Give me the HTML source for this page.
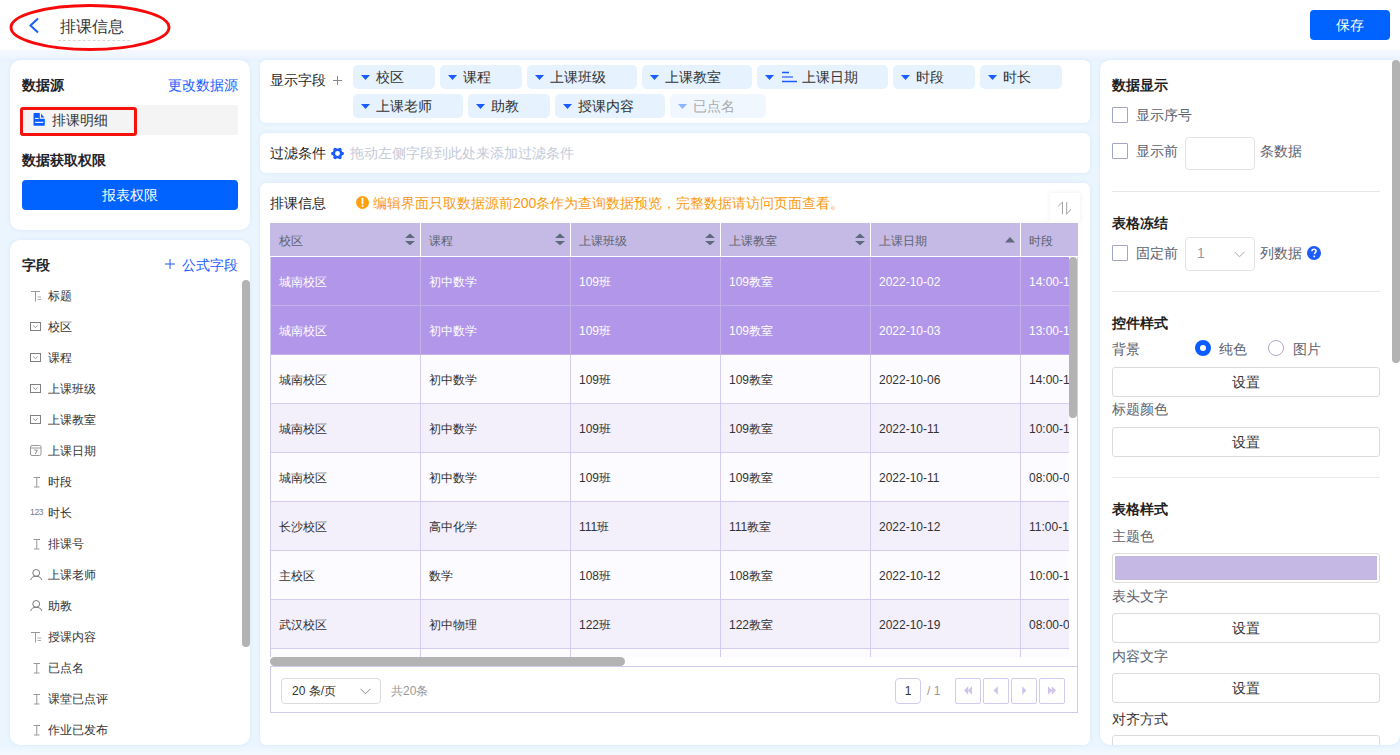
<!DOCTYPE html>
<html><head><meta charset="utf-8">
<style>
*{box-sizing:border-box;margin:0;padding:0}
html,body{width:1400px;height:755px;overflow:hidden}
body{font-family:"Liberation Sans",sans-serif;background:#ebf5fe;position:relative;color:#1f2329}
.a{position:absolute;white-space:nowrap}
.hdr{left:0;top:0;width:1400px;height:50px;background:#fff}
.panel{position:absolute;background:#fff;border-radius:10px;box-shadow:0 0 4px rgba(40,140,255,0.10)}
.t14{font-size:14px;line-height:14px}
.t12{font-size:12px;line-height:12px}
.b{font-weight:bold}
.blue{color:#1a5cff}
</style></head><body>
<!-- header -->
<div class="a" style="left:0;top:744px;width:1400px;height:11px;background:linear-gradient(#e9f4fe,#f4f9fe)"></div>
<div class="a hdr"></div>
<div class="a" style="left:0;top:50px;width:1400px;height:12px;background:linear-gradient(#f6f9fe,#e8f2fe)"></div>
<svg class="a" style="left:28px;top:17px" width="12" height="17" viewBox="0 0 12 17"><path d="M10 1.5 L2.5 8.5 L10 15.5" fill="none" stroke="#1a5cff" stroke-width="2"/></svg>
<div class="a" style="left:60px;top:18px;font-size:16px;line-height:18px;color:#333">排课信息</div>
<div class="a" style="left:58px;top:40px;width:72px;border-top:1px dashed #d8d8d8"></div>
<svg class="a" style="left:9px;top:3px" width="162" height="49" viewBox="0 0 162 49"><ellipse cx="81" cy="24.5" rx="79" ry="22" fill="none" stroke="#f80a0a" stroke-width="2.9"/></svg>
<div class="a" style="left:1310px;top:10px;width:80px;height:30px;background:#0062ff;border-radius:4px;color:#fff;font-size:14px;line-height:30px;text-align:center">保存</div>

<!-- left panel 1 -->
<div class="panel" style="left:10px;top:60px;width:240px;height:170px"></div>
<div class="a t14 b" style="left:22px;top:78px">数据源</div>
<div class="a t14 blue" style="left:168px;top:78px">更改数据源</div>
<div class="a" style="left:22px;top:105px;width:216px;height:30px;background:#f4f4f4;border-radius:2px"></div>
<svg class="a" style="left:33px;top:113px" width="13" height="14" viewBox="-0.5 0 13 14"><path d="M0.8 0H6.3V5.7H11.3V11.9A0.8 0.8 0 0 1 10.5 12.7H0.8A0.8 0.8 0 0 1 0 11.9V0.8A0.8 0.8 0 0 1 0.8 0Z" fill="#0a5cff"/><path d="M7.5 0.7V4.6H10.9Z" fill="#0a5cff"/><rect x="1.6" y="4.9" width="3.6" height="1.1" fill="#fff"/><rect x="1.6" y="8.8" width="8.2" height="1.1" fill="#fff"/></svg>
<div class="a t14" style="left:52px;top:113px;color:#333">排课明细</div>
<div class="a" style="left:20px;top:107px;width:117px;height:29px;border:3px solid #f5120c;border-radius:3px"></div>
<div class="a t14 b" style="left:22px;top:153px">数据获取权限</div>
<div class="a" style="left:22px;top:180px;width:216px;height:30px;background:#0062ff;border-radius:4px;color:#fff;font-size:14px;line-height:30px;text-align:center">报表权限</div>

<!-- left panel 2 -->
<div class="panel" style="left:10px;top:240px;width:240px;height:505px"></div>
<div class="a t14 b" style="left:22px;top:258px">字段</div>
<svg class="a" style="left:165px;top:259px" width="10" height="10" viewBox="0 0 10 10"><path d="M5 0V10M0 5H10" stroke="#1a5cff" stroke-width="1"/></svg>
<div class="a t14 blue" style="left:182px;top:258px">公式字段</div>
<div class="a" style="left:242px;top:280px;width:8px;height:367px;background:#b3b3b3;border-radius:4px"></div>
<svg class="a" style="left:31px;top:291px" width="11" height="11" viewBox="0 0 11 11"><path d="M0 0.5H9M4.5 0.5V10.5" stroke="#999" stroke-width="1" fill="none"/><path d="M6.5 6H10M6.5 8.5H10" stroke="#aaa" stroke-width="1" fill="none"/></svg>
<div class="a t12" style="left:48px;top:290px;color:#333">标题</div>
<svg class="a" style="left:29px;top:322px" width="12" height="10" viewBox="0 0 12 10"><rect x="1.5" y="0.5" width="10" height="8" fill="none" stroke="#808080" stroke-width="1"/><path d="M4.3 3.4L6.5 5.6L8.7 3.4" fill="none" stroke="#999" stroke-width="1"/></svg>
<div class="a t12" style="left:48px;top:321px;color:#333">校区</div>
<svg class="a" style="left:29px;top:353px" width="12" height="10" viewBox="0 0 12 10"><rect x="1.5" y="0.5" width="10" height="8" fill="none" stroke="#808080" stroke-width="1"/><path d="M4.3 3.4L6.5 5.6L8.7 3.4" fill="none" stroke="#999" stroke-width="1"/></svg>
<div class="a t12" style="left:48px;top:352px;color:#333">课程</div>
<svg class="a" style="left:29px;top:384px" width="12" height="10" viewBox="0 0 12 10"><rect x="1.5" y="0.5" width="10" height="8" fill="none" stroke="#808080" stroke-width="1"/><path d="M4.3 3.4L6.5 5.6L8.7 3.4" fill="none" stroke="#999" stroke-width="1"/></svg>
<div class="a t12" style="left:48px;top:383px;color:#333">上课班级</div>
<svg class="a" style="left:29px;top:415px" width="12" height="10" viewBox="0 0 12 10"><rect x="1.5" y="0.5" width="10" height="8" fill="none" stroke="#808080" stroke-width="1"/><path d="M4.3 3.4L6.5 5.6L8.7 3.4" fill="none" stroke="#999" stroke-width="1"/></svg>
<div class="a t12" style="left:48px;top:414px;color:#333">上课教室</div>
<svg class="a" style="left:30px;top:445px" width="12" height="11" viewBox="0 0 12 11"><rect x="0.5" y="0.5" width="10.5" height="10" rx="1.5" fill="none" stroke="#999" stroke-width="1"/><path d="M0.5 3H11" stroke="#999" stroke-width="1"/><path d="M4.3 5H7.3L5.3 9" fill="none" stroke="#888" stroke-width="0.9"/></svg>
<div class="a t12" style="left:48px;top:445px;color:#333">上课日期</div>
<svg class="a" style="left:33px;top:477px" width="8" height="11" viewBox="0 0 8 11"><path d="M0.5 0.5H7M3.75 0.5V10M1 10H6.5" stroke="#999" stroke-width="1" fill="none"/></svg>
<div class="a t12" style="left:48px;top:476px;color:#333">时段</div>
<div class="a" style="left:30px;top:508px;font-size:8.6px;line-height:9px;color:#7a7a8a;letter-spacing:-0.35px">123</div>
<div class="a t12" style="left:48px;top:507px;color:#333">时长</div>
<svg class="a" style="left:33px;top:539px" width="8" height="11" viewBox="0 0 8 11"><path d="M0.5 0.5H7M3.75 0.5V10M1 10H6.5" stroke="#999" stroke-width="1" fill="none"/></svg>
<div class="a t12" style="left:48px;top:538px;color:#333">排课号</div>
<svg class="a" style="left:30px;top:568px" width="13" height="13" viewBox="0 0 13 13"><circle cx="6.2" cy="4.9" r="3.4" fill="none" stroke="#777" stroke-width="1"/><path d="M0.6 12C1.2 9.6 3.2 8.3 6.2 8.3S11.2 9.6 11.8 12" fill="none" stroke="#777" stroke-width="1"/></svg>
<div class="a t12" style="left:48px;top:569px;color:#333">上课老师</div>
<svg class="a" style="left:30px;top:599px" width="13" height="13" viewBox="0 0 13 13"><circle cx="6.2" cy="4.9" r="3.4" fill="none" stroke="#777" stroke-width="1"/><path d="M0.6 12C1.2 9.6 3.2 8.3 6.2 8.3S11.2 9.6 11.8 12" fill="none" stroke="#777" stroke-width="1"/></svg>
<div class="a t12" style="left:48px;top:600px;color:#333">助教</div>
<svg class="a" style="left:31px;top:632px" width="11" height="11" viewBox="0 0 11 11"><path d="M0 0.5H9M4.5 0.5V10.5" stroke="#999" stroke-width="1" fill="none"/><path d="M6.5 6H10M6.5 8.5H10" stroke="#aaa" stroke-width="1" fill="none"/></svg>
<div class="a t12" style="left:48px;top:631px;color:#333">授课内容</div>
<svg class="a" style="left:33px;top:663px" width="8" height="11" viewBox="0 0 8 11"><path d="M0.5 0.5H7M3.75 0.5V10M1 10H6.5" stroke="#999" stroke-width="1" fill="none"/></svg>
<div class="a t12" style="left:48px;top:662px;color:#333">已点名</div>
<svg class="a" style="left:33px;top:694px" width="8" height="11" viewBox="0 0 8 11"><path d="M0.5 0.5H7M3.75 0.5V10M1 10H6.5" stroke="#999" stroke-width="1" fill="none"/></svg>
<div class="a t12" style="left:48px;top:693px;color:#333">课堂已点评</div>
<svg class="a" style="left:33px;top:725px" width="8" height="11" viewBox="0 0 8 11"><path d="M0.5 0.5H7M3.75 0.5V10M1 10H6.5" stroke="#999" stroke-width="1" fill="none"/></svg>
<div class="a t12" style="left:48px;top:724px;color:#333">作业已发布</div>

<!-- middle panels -->
<div class="panel" style="left:260px;top:60px;width:830px;height:63px;border-radius:6px"></div>
<div class="panel" style="left:260px;top:133px;width:830px;height:40px;border-radius:6px"></div>
<div class="a t14" style="left:270px;top:73px;color:#1f1f1f">显示字段</div>
<svg class="a" style="left:333px;top:76px" width="9" height="9" viewBox="0 0 9 9"><path d="M4.5 0V9M0 4.5H9" stroke="#888" stroke-width="1"/></svg>
<div class="a" style="left:353px;top:65px;width:82px;height:24px;background:#e6f2fe;border-radius:5px"></div>
<svg class="a" style="left:361px;top:75px" width="9" height="5" viewBox="0 0 9 5"><path d="M0 0H9L4.5 5Z" fill="#1a5cff"/></svg>
<div class="a t14" style="left:376px;top:70px;color:#333">校区</div>
<div class="a" style="left:440px;top:65px;width:82px;height:24px;background:#e6f2fe;border-radius:5px"></div>
<svg class="a" style="left:448px;top:75px" width="9" height="5" viewBox="0 0 9 5"><path d="M0 0H9L4.5 5Z" fill="#1a5cff"/></svg>
<div class="a t14" style="left:463px;top:70px;color:#333">课程</div>
<div class="a" style="left:527px;top:65px;width:110px;height:24px;background:#e6f2fe;border-radius:5px"></div>
<svg class="a" style="left:535px;top:75px" width="9" height="5" viewBox="0 0 9 5"><path d="M0 0H9L4.5 5Z" fill="#1a5cff"/></svg>
<div class="a t14" style="left:550px;top:70px;color:#333">上课班级</div>
<div class="a" style="left:642px;top:65px;width:110px;height:24px;background:#e6f2fe;border-radius:5px"></div>
<svg class="a" style="left:650px;top:75px" width="9" height="5" viewBox="0 0 9 5"><path d="M0 0H9L4.5 5Z" fill="#1a5cff"/></svg>
<div class="a t14" style="left:665px;top:70px;color:#333">上课教室</div>
<div class="a" style="left:757px;top:65px;width:131px;height:24px;background:#e6f2fe;border-radius:5px"></div>
<svg class="a" style="left:765px;top:75px" width="9" height="5" viewBox="0 0 9 5"><path d="M0 0H9L4.5 5Z" fill="#1a5cff"/></svg>
<svg class="a" style="left:781px;top:71px" width="16" height="12" viewBox="0 0 16 12"><path d="M1 1.5H8M1 6H12M1 10.5H16.5" stroke="#1a5cff" stroke-width="1.3"/><path d="M1 6H12" stroke="#7f9dff" stroke-width="1.6"/></svg>
<div class="a t14" style="left:802px;top:70px;color:#333">上课日期</div>
<div class="a" style="left:893px;top:65px;width:82px;height:24px;background:#e6f2fe;border-radius:5px"></div>
<svg class="a" style="left:901px;top:75px" width="9" height="5" viewBox="0 0 9 5"><path d="M0 0H9L4.5 5Z" fill="#1a5cff"/></svg>
<div class="a t14" style="left:916px;top:70px;color:#333">时段</div>
<div class="a" style="left:980px;top:65px;width:82px;height:24px;background:#e6f2fe;border-radius:5px"></div>
<svg class="a" style="left:988px;top:75px" width="9" height="5" viewBox="0 0 9 5"><path d="M0 0H9L4.5 5Z" fill="#1a5cff"/></svg>
<div class="a t14" style="left:1003px;top:70px;color:#333">时长</div>
<div class="a" style="left:353px;top:94px;width:110px;height:24px;background:#e6f2fe;border-radius:5px"></div>
<svg class="a" style="left:361px;top:104px" width="9" height="5" viewBox="0 0 9 5"><path d="M0 0H9L4.5 5Z" fill="#1a5cff"/></svg>
<div class="a t14" style="left:376px;top:99px;color:#333">上课老师</div>
<div class="a" style="left:468px;top:94px;width:82px;height:24px;background:#e6f2fe;border-radius:5px"></div>
<svg class="a" style="left:476px;top:104px" width="9" height="5" viewBox="0 0 9 5"><path d="M0 0H9L4.5 5Z" fill="#1a5cff"/></svg>
<div class="a t14" style="left:491px;top:99px;color:#333">助教</div>
<div class="a" style="left:555px;top:94px;width:110px;height:24px;background:#e6f2fe;border-radius:5px"></div>
<svg class="a" style="left:563px;top:104px" width="9" height="5" viewBox="0 0 9 5"><path d="M0 0H9L4.5 5Z" fill="#1a5cff"/></svg>
<div class="a t14" style="left:578px;top:99px;color:#333">授课内容</div>
<div class="a" style="left:670px;top:94px;width:96px;height:24px;background:#f0f7fe;border-radius:5px"></div>
<svg class="a" style="left:678px;top:104px" width="9" height="5" viewBox="0 0 9 5"><path d="M0 0H9L4.5 5Z" fill="#8fb4ff"/></svg>
<div class="a t14" style="left:693px;top:99px;color:#aaa">已点名</div>
<div class="a t14" style="left:270px;top:146px;color:#1f1f1f">过滤条件</div>
<svg class="a" style="left:331px;top:147px" width="13" height="13" viewBox="0 0 13 13"><circle cx="6.5" cy="6.5" r="4.9" fill="#1a5cff"/><circle cx="11.25" cy="6.50" r="1.75" fill="#1a5cff"/><circle cx="8.88" cy="10.48" r="1.75" fill="#1a5cff"/><circle cx="4.13" cy="10.48" r="1.75" fill="#1a5cff"/><circle cx="1.75" cy="6.50" r="1.75" fill="#1a5cff"/><circle cx="4.12" cy="2.52" r="1.75" fill="#1a5cff"/><circle cx="8.88" cy="2.52" r="1.75" fill="#1a5cff"/><circle cx="6.5" cy="6.5" r="2.4" fill="#fff"/></svg>
<div class="a t14" style="left:350px;top:146px;color:#c3cad8">拖动左侧字段到此处来添加过滤条件</div>
<div class="panel" style="left:260px;top:183px;width:830px;height:562px;border-radius:6px"></div>
<div class="a t14" style="left:270px;top:196px;color:#1f1f1f">排课信息</div>
<svg class="a" style="left:356px;top:196px" width="13" height="13" viewBox="0 0 13 13"><circle cx="6.5" cy="6.5" r="6.5" fill="#ffa00a"/><path d="M6.5 2.6V7.6" stroke="#fff" stroke-width="1.8" stroke-linecap="round"/><circle cx="6.5" cy="10" r="1" fill="#fff"/></svg>
<div class="a t14" style="left:373px;top:196px;color:#fa9a12">编辑界面只取数据源前200条作为查询数据预览，完整数据请访问页面查看。</div>
<div class="a" style="left:1050px;top:193px;width:30px;height:30px;background:#fff;box-shadow:0 0 4px rgba(60,40,140,0.09)"></div>
<svg class="a" style="left:1056px;top:200px" width="16" height="16" viewBox="0 0 16 16"><path d="M2.2 6.3L6.5 2V14.2" fill="none" stroke="#a5a5a5" stroke-width="1"/><path d="M10.7 2V14.2L14.9 9.2" fill="none" stroke="#a5a5a5" stroke-width="1"/></svg>
<div class="a" style="left:270px;top:223px;width:808px;height:490px;border:1px solid #d4c9ef;border-top:none;background:#fff"></div>
<div class="a" style="left:270px;top:223px;width:808px;height:33px;background:#c5b9e5"></div>
<div class="a" style="left:270px;top:256px;width:808px;height:1px;background:#fff"></div>
<div class="a t12" style="left:279px;top:235px;color:#5d6470">校区</div>
<svg class="a" style="left:405px;top:233px" width="10" height="13" viewBox="0 0 10 13"><path d="M0 5H10L5 0.6Z" fill="#5c6a7c"/><path d="M0 8H10L5 12.2Z" fill="#5c6a7c"/></svg>
<div class="a" style="left:420px;top:223px;width:1px;height:33px;background:#fff"></div>
<div class="a t12" style="left:429px;top:235px;color:#5d6470">课程</div>
<svg class="a" style="left:555px;top:233px" width="10" height="13" viewBox="0 0 10 13"><path d="M0 5H10L5 0.6Z" fill="#5c6a7c"/><path d="M0 8H10L5 12.2Z" fill="#5c6a7c"/></svg>
<div class="a" style="left:570px;top:223px;width:1px;height:33px;background:#fff"></div>
<div class="a t12" style="left:579px;top:235px;color:#5d6470">上课班级</div>
<svg class="a" style="left:705px;top:233px" width="10" height="13" viewBox="0 0 10 13"><path d="M0 5H10L5 0.6Z" fill="#5c6a7c"/><path d="M0 8H10L5 12.2Z" fill="#5c6a7c"/></svg>
<div class="a" style="left:720px;top:223px;width:1px;height:33px;background:#fff"></div>
<div class="a t12" style="left:729px;top:235px;color:#5d6470">上课教室</div>
<svg class="a" style="left:855px;top:233px" width="10" height="13" viewBox="0 0 10 13"><path d="M0 5H10L5 0.6Z" fill="#5c6a7c"/><path d="M0 8H10L5 12.2Z" fill="#5c6a7c"/></svg>
<div class="a" style="left:870px;top:223px;width:1px;height:33px;background:#fff"></div>
<div class="a t12" style="left:879px;top:235px;color:#5d6470">上课日期</div>
<svg class="a" style="left:1005px;top:237px" width="10" height="6" viewBox="0 0 10 6"><path d="M0 5.5H10L5 0Z" fill="#5f6b7a"/></svg>
<div class="a" style="left:1020px;top:223px;width:1px;height:33px;background:#fff"></div>
<div class="a t12" style="left:1029px;top:235px;color:#5d6470">时段</div>
<div class="a" style="left:270px;top:257px;width:799px;height:400px;overflow:hidden">
<div class="a" style="left:0;top:0px;width:900px;height:49px;background:#b196e9;border-bottom:1px solid #c3b0e6"></div>
<div class="a t12" style="left:9px;top:19px;color:#fff">城南校区</div>
<div class="a" style="left:150px;top:0px;width:1px;height:49px;background:#c3b0e6"></div>
<div class="a t12" style="left:159px;top:19px;color:#fff">初中数学</div>
<div class="a" style="left:300px;top:0px;width:1px;height:49px;background:#c3b0e6"></div>
<div class="a t12" style="left:309px;top:19px;color:#fff">109班</div>
<div class="a" style="left:450px;top:0px;width:1px;height:49px;background:#c3b0e6"></div>
<div class="a t12" style="left:459px;top:19px;color:#fff">109教室</div>
<div class="a" style="left:600px;top:0px;width:1px;height:49px;background:#c3b0e6"></div>
<div class="a t12" style="left:609px;top:19px;color:#fff">2022-10-02</div>
<div class="a" style="left:750px;top:0px;width:1px;height:49px;background:#c3b0e6"></div>
<div class="a t12" style="left:759px;top:19px;color:#fff">14:00-16:00</div>
<div class="a" style="left:0;top:49px;width:900px;height:49px;background:#b196e9;border-bottom:1px solid #c3b0e6"></div>
<div class="a t12" style="left:9px;top:68px;color:#fff">城南校区</div>
<div class="a" style="left:150px;top:49px;width:1px;height:49px;background:#c3b0e6"></div>
<div class="a t12" style="left:159px;top:68px;color:#fff">初中数学</div>
<div class="a" style="left:300px;top:49px;width:1px;height:49px;background:#c3b0e6"></div>
<div class="a t12" style="left:309px;top:68px;color:#fff">109班</div>
<div class="a" style="left:450px;top:49px;width:1px;height:49px;background:#c3b0e6"></div>
<div class="a t12" style="left:459px;top:68px;color:#fff">109教室</div>
<div class="a" style="left:600px;top:49px;width:1px;height:49px;background:#c3b0e6"></div>
<div class="a t12" style="left:609px;top:68px;color:#fff">2022-10-03</div>
<div class="a" style="left:750px;top:49px;width:1px;height:49px;background:#c3b0e6"></div>
<div class="a t12" style="left:759px;top:68px;color:#fff">13:00-15:00</div>
<div class="a" style="left:0;top:98px;width:900px;height:49px;background:#fcfbff;border-bottom:1px solid #d6cbf0"></div>
<div class="a t12" style="left:9px;top:117px;color:#333">城南校区</div>
<div class="a" style="left:150px;top:98px;width:1px;height:49px;background:#d6cbf0"></div>
<div class="a t12" style="left:159px;top:117px;color:#333">初中数学</div>
<div class="a" style="left:300px;top:98px;width:1px;height:49px;background:#d6cbf0"></div>
<div class="a t12" style="left:309px;top:117px;color:#333">109班</div>
<div class="a" style="left:450px;top:98px;width:1px;height:49px;background:#d6cbf0"></div>
<div class="a t12" style="left:459px;top:117px;color:#333">109教室</div>
<div class="a" style="left:600px;top:98px;width:1px;height:49px;background:#d6cbf0"></div>
<div class="a t12" style="left:609px;top:117px;color:#333">2022-10-06</div>
<div class="a" style="left:750px;top:98px;width:1px;height:49px;background:#d6cbf0"></div>
<div class="a t12" style="left:759px;top:117px;color:#333">14:00-16:00</div>
<div class="a" style="left:0;top:147px;width:900px;height:49px;background:#f3effb;border-bottom:1px solid #d6cbf0"></div>
<div class="a t12" style="left:9px;top:166px;color:#333">城南校区</div>
<div class="a" style="left:150px;top:147px;width:1px;height:49px;background:#d6cbf0"></div>
<div class="a t12" style="left:159px;top:166px;color:#333">初中数学</div>
<div class="a" style="left:300px;top:147px;width:1px;height:49px;background:#d6cbf0"></div>
<div class="a t12" style="left:309px;top:166px;color:#333">109班</div>
<div class="a" style="left:450px;top:147px;width:1px;height:49px;background:#d6cbf0"></div>
<div class="a t12" style="left:459px;top:166px;color:#333">109教室</div>
<div class="a" style="left:600px;top:147px;width:1px;height:49px;background:#d6cbf0"></div>
<div class="a t12" style="left:609px;top:166px;color:#333">2022-10-11</div>
<div class="a" style="left:750px;top:147px;width:1px;height:49px;background:#d6cbf0"></div>
<div class="a t12" style="left:759px;top:166px;color:#333">10:00-12:00</div>
<div class="a" style="left:0;top:196px;width:900px;height:49px;background:#fcfbff;border-bottom:1px solid #d6cbf0"></div>
<div class="a t12" style="left:9px;top:215px;color:#333">城南校区</div>
<div class="a" style="left:150px;top:196px;width:1px;height:49px;background:#d6cbf0"></div>
<div class="a t12" style="left:159px;top:215px;color:#333">初中数学</div>
<div class="a" style="left:300px;top:196px;width:1px;height:49px;background:#d6cbf0"></div>
<div class="a t12" style="left:309px;top:215px;color:#333">109班</div>
<div class="a" style="left:450px;top:196px;width:1px;height:49px;background:#d6cbf0"></div>
<div class="a t12" style="left:459px;top:215px;color:#333">109教室</div>
<div class="a" style="left:600px;top:196px;width:1px;height:49px;background:#d6cbf0"></div>
<div class="a t12" style="left:609px;top:215px;color:#333">2022-10-11</div>
<div class="a" style="left:750px;top:196px;width:1px;height:49px;background:#d6cbf0"></div>
<div class="a t12" style="left:759px;top:215px;color:#333">08:00-09:00</div>
<div class="a" style="left:0;top:245px;width:900px;height:49px;background:#f3effb;border-bottom:1px solid #d6cbf0"></div>
<div class="a t12" style="left:9px;top:264px;color:#333">长沙校区</div>
<div class="a" style="left:150px;top:245px;width:1px;height:49px;background:#d6cbf0"></div>
<div class="a t12" style="left:159px;top:264px;color:#333">高中化学</div>
<div class="a" style="left:300px;top:245px;width:1px;height:49px;background:#d6cbf0"></div>
<div class="a t12" style="left:309px;top:264px;color:#333">111班</div>
<div class="a" style="left:450px;top:245px;width:1px;height:49px;background:#d6cbf0"></div>
<div class="a t12" style="left:459px;top:264px;color:#333">111教室</div>
<div class="a" style="left:600px;top:245px;width:1px;height:49px;background:#d6cbf0"></div>
<div class="a t12" style="left:609px;top:264px;color:#333">2022-10-12</div>
<div class="a" style="left:750px;top:245px;width:1px;height:49px;background:#d6cbf0"></div>
<div class="a t12" style="left:759px;top:264px;color:#333">11:00-13:00</div>
<div class="a" style="left:0;top:294px;width:900px;height:49px;background:#fcfbff;border-bottom:1px solid #d6cbf0"></div>
<div class="a t12" style="left:9px;top:313px;color:#333">主校区</div>
<div class="a" style="left:150px;top:294px;width:1px;height:49px;background:#d6cbf0"></div>
<div class="a t12" style="left:159px;top:313px;color:#333">数学</div>
<div class="a" style="left:300px;top:294px;width:1px;height:49px;background:#d6cbf0"></div>
<div class="a t12" style="left:309px;top:313px;color:#333">108班</div>
<div class="a" style="left:450px;top:294px;width:1px;height:49px;background:#d6cbf0"></div>
<div class="a t12" style="left:459px;top:313px;color:#333">108教室</div>
<div class="a" style="left:600px;top:294px;width:1px;height:49px;background:#d6cbf0"></div>
<div class="a t12" style="left:609px;top:313px;color:#333">2022-10-12</div>
<div class="a" style="left:750px;top:294px;width:1px;height:49px;background:#d6cbf0"></div>
<div class="a t12" style="left:759px;top:313px;color:#333">10:00-12:00</div>
<div class="a" style="left:0;top:343px;width:900px;height:49px;background:#f3effb;border-bottom:1px solid #d6cbf0"></div>
<div class="a t12" style="left:9px;top:362px;color:#333">武汉校区</div>
<div class="a" style="left:150px;top:343px;width:1px;height:49px;background:#d6cbf0"></div>
<div class="a t12" style="left:159px;top:362px;color:#333">初中物理</div>
<div class="a" style="left:300px;top:343px;width:1px;height:49px;background:#d6cbf0"></div>
<div class="a t12" style="left:309px;top:362px;color:#333">122班</div>
<div class="a" style="left:450px;top:343px;width:1px;height:49px;background:#d6cbf0"></div>
<div class="a t12" style="left:459px;top:362px;color:#333">122教室</div>
<div class="a" style="left:600px;top:343px;width:1px;height:49px;background:#d6cbf0"></div>
<div class="a t12" style="left:609px;top:362px;color:#333">2022-10-19</div>
<div class="a" style="left:750px;top:343px;width:1px;height:49px;background:#d6cbf0"></div>
<div class="a t12" style="left:759px;top:362px;color:#333">08:00-09:00</div>
<div class="a" style="left:0;top:392px;width:900px;height:49px;background:#fcfbff;border-bottom:1px solid #d6cbf0"></div>
<div class="a t12" style="left:9px;top:411px;color:#333"></div>
<div class="a" style="left:150px;top:392px;width:1px;height:49px;background:#d6cbf0"></div>
<div class="a t12" style="left:159px;top:411px;color:#333"></div>
<div class="a" style="left:300px;top:392px;width:1px;height:49px;background:#d6cbf0"></div>
<div class="a t12" style="left:309px;top:411px;color:#333"></div>
<div class="a" style="left:450px;top:392px;width:1px;height:49px;background:#d6cbf0"></div>
<div class="a t12" style="left:459px;top:411px;color:#333"></div>
<div class="a" style="left:600px;top:392px;width:1px;height:49px;background:#d6cbf0"></div>
<div class="a t12" style="left:609px;top:411px;color:#333"></div>
<div class="a" style="left:750px;top:392px;width:1px;height:49px;background:#d6cbf0"></div>
<div class="a t12" style="left:759px;top:411px;color:#333"></div>
</div>
<div class="a" style="left:270px;top:257px;width:1px;height:410px;background:#d4c9ef"></div>
<div class="a" style="left:1069px;top:257px;width:8px;height:161px;background:#b3b3b3;border-radius:4px"></div>
<div class="a" style="left:270px;top:657px;width:807px;height:9px;background:#fff"></div>
<div class="a" style="left:270px;top:657px;width:355px;height:9px;background:#b3b3b3;border-radius:5px"></div>
<div class="a" style="left:270px;top:666px;width:808px;height:1px;background:#d4c9ef"></div>
<div class="a" style="left:281px;top:678px;width:100px;height:26px;border:1px solid #dcdcdc;border-radius:4px"></div>
<div class="a t12" style="left:292px;top:685px;color:#333">20 条/页</div>
<svg class="a" style="left:360px;top:688px" width="11" height="7" viewBox="0 0 11 7"><path d="M0.5 0.8L5.5 5.8L10.5 0.8" fill="none" stroke="#888" stroke-width="1"/></svg>
<div class="a t12" style="left:391px;top:685px;color:#999">共20条</div>
<div class="a" style="left:895px;top:678px;width:26px;height:26px;border:1px solid #d4c9ef;border-radius:4px;font-size:12px;line-height:24px;text-align:center;color:#333">1</div>
<div class="a t12" style="left:927px;top:685px;color:#999">/ 1</div>
<div class="a" style="left:955px;top:678px;width:26px;height:26px;border:1px solid #d4c9ef;border-radius:2px"></div>
<svg class="a" style="left:961px;top:684px" width="14" height="13" viewBox="0 0 14 13"><path d="M7.2 2.3L3 6.5L7.2 10.7ZM11 2.3L6.8 6.5L11 10.7Z" fill="#cfc4ec"/></svg>
<div class="a" style="left:983px;top:678px;width:26px;height:26px;border:1px solid #d4c9ef;border-radius:2px"></div>
<svg class="a" style="left:989px;top:684px" width="14" height="13" viewBox="0 0 14 13"><path d="M8.8 2.3L4.6 6.5L8.8 10.7Z" fill="#cfc4ec"/></svg>
<div class="a" style="left:1011px;top:678px;width:26px;height:26px;border:1px solid #d4c9ef;border-radius:2px"></div>
<svg class="a" style="left:1017px;top:684px" width="14" height="13" viewBox="0 0 14 13"><path d="M5.2 2.3L9.4 6.5L5.2 10.7Z" fill="#cfc4ec"/></svg>
<div class="a" style="left:1039px;top:678px;width:26px;height:26px;border:1px solid #d4c9ef;border-radius:2px"></div>
<svg class="a" style="left:1045px;top:684px" width="14" height="13" viewBox="0 0 14 13"><path d="M3 2.3L7.2 6.5L3 10.7ZM6.8 2.3L11 6.5L6.8 10.7Z" fill="#cfc4ec"/></svg>

<!-- right panel -->
<div class="panel" style="left:1100px;top:60px;width:300px;height:685px;overflow:hidden">
<div style="position:absolute;left:-1100px;top:-60px;width:1400px;height:755px">
<div class="a t14 b" style="left:1112px;top:78px;color:#1f1f1f;">数据显示</div>
<div class="a" style="left:1112px;top:107px;width:16px;height:16px;border:1px solid #a3a5c6;border-radius:1px;background:#fff"></div>
<div class="a t14" style="left:1136px;top:108px;color:#5c6270;">显示序号</div>
<div class="a" style="left:1112px;top:143px;width:16px;height:16px;border:1px solid #a3a5c6;border-radius:1px;background:#fff"></div>
<div class="a t14" style="left:1136px;top:144px;color:#5c6270;">显示前</div>
<div class="a" style="left:1185px;top:137px;width:70px;height:33px;border:1px solid #e3e3e3;border-radius:4px"></div>
<div class="a t14" style="left:1260px;top:144px;color:#5c6270;">条数据</div>
<div class="a" style="left:1112px;top:191px;width:268px;height:1px;background:#e8e8e8"></div>
<div class="a t14 b" style="left:1112px;top:216px;color:#1f1f1f;">表格冻结</div>
<div class="a" style="left:1112px;top:245px;width:16px;height:16px;border:1px solid #a3a5c6;border-radius:1px;background:#fff"></div>
<div class="a t14" style="left:1136px;top:246px;color:#5c6270;">固定前</div>
<div class="a" style="left:1185px;top:237px;width:70px;height:34px;border:1px solid #e3e3e3;border-radius:4px"></div>
<div class="a t14" style="left:1197px;top:246px;color:#999;">1</div>
<svg class="a" style="left:1234px;top:251px" width="11" height="7" viewBox="0 0 11 7"><path d="M0.5 0.8L5.5 5.8L10.5 0.8" fill="none" stroke="#aaa" stroke-width="1"/></svg>
<div class="a t14" style="left:1260px;top:246px;color:#5c6270;">列数据</div>
<svg class="a" style="left:1307px;top:246px" width="14" height="14" viewBox="0 0 14 14"><circle cx="7" cy="7" r="7" fill="#1a5cff"/><path d="M4.9 5.3C4.9 4 5.8 3.2 7 3.2S9.1 4 9.1 5.1C9.1 6.4 7.4 6.6 7.4 8.2" fill="none" stroke="#fff" stroke-width="1.6"/><circle cx="7.3" cy="10.4" r="0.95" fill="#fff"/></svg>
<div class="a" style="left:1112px;top:291px;width:268px;height:1px;background:#e8e8e8"></div>
<div class="a t14 b" style="left:1112px;top:316px;color:#1f1f1f;">控件样式</div>
<div class="a t14" style="left:1112px;top:342px;color:#5c6270;">背景</div>
<div class="a" style="left:1195px;top:340px;width:16px;height:16px;border:5px solid #0a5cff;border-radius:50%;background:#fff"></div>
<div class="a t14" style="left:1219px;top:342px;color:#5c6270;">纯色</div>
<div class="a" style="left:1268px;top:340px;width:16px;height:16px;border:1px solid #a9abc4;border-radius:50%;background:#fff"></div>
<div class="a t14" style="left:1293px;top:342px;color:#5c6270;">图片</div>
<div class="a" style="left:1112px;top:367px;width:268px;height:30px;border:1px solid #dcdcdc;border-radius:3px;background:#fff;font-size:14px;line-height:29px;text-align:center;color:#333">设置</div>
<div class="a t14" style="left:1112px;top:402px;color:#5c6270;">标题颜色</div>
<div class="a" style="left:1112px;top:427px;width:268px;height:30px;border:1px solid #dcdcdc;border-radius:3px;background:#fff;font-size:14px;line-height:29px;text-align:center;color:#333">设置</div>
<div class="a" style="left:1112px;top:477px;width:268px;height:1px;background:#e8e8e8"></div>
<div class="a t14 b" style="left:1112px;top:502px;color:#1f1f1f;">表格样式</div>
<div class="a t14" style="left:1112px;top:529px;color:#5c6270;">主题色</div>
<div class="a" style="left:1112px;top:553px;width:268px;height:30px;border:1px solid #dcdcdc;border-radius:3px;background:#fff"></div>
<div class="a" style="left:1115px;top:556px;width:262px;height:24px;background:#c5b8e4"></div>
<div class="a t14" style="left:1112px;top:589px;color:#5c6270;">表头文字</div>
<div class="a" style="left:1112px;top:613px;width:268px;height:30px;border:1px solid #dcdcdc;border-radius:3px;background:#fff;font-size:14px;line-height:29px;text-align:center;color:#333">设置</div>
<div class="a t14" style="left:1112px;top:649px;color:#5c6270;">内容文字</div>
<div class="a" style="left:1112px;top:673px;width:268px;height:30px;border:1px solid #dcdcdc;border-radius:3px;background:#fff;font-size:14px;line-height:29px;text-align:center;color:#333">设置</div>
<div class="a t14" style="left:1112px;top:712px;color:#333;">对齐方式</div>
<div class="a" style="left:1112px;top:735px;width:268px;height:29px;border:1px solid #dcdcdc;border-radius:3px;background:#fff"></div>
</div>
</div>
<div class="a" style="left:1390px;top:60px;width:10px;height:12px;background:#fff"></div>
<div class="a" style="left:1392px;top:60px;width:8px;height:303px;background:#b3b3b3;border-radius:4px"></div>

</body></html>
